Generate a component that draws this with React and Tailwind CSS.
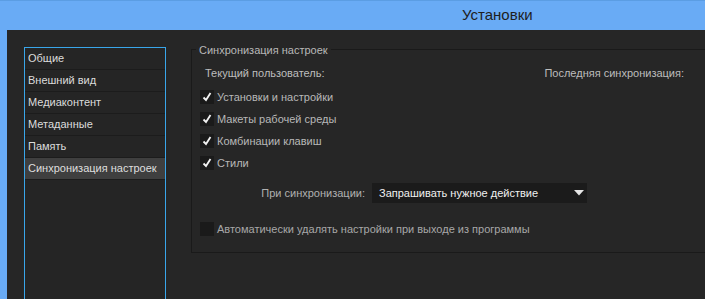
import React from 'react';

const sections = [
  'Общие',
  'Внешний вид',
  'Медиаконтент',
  'Метаданные',
  'Память',
  'Синхронизация настроек',
];

const syncItems = [
  'Установки и настройки',
  'Макеты рабочей среды',
  'Комбинации клавиш',
  'Стили',
];

const Check = ({ checked }) => (
  <span className="flex h-[14px] w-[14px] shrink-0 items-center justify-center bg-[#1a1a1a]">
    {checked && (
      <svg width="10" height="10" viewBox="0 0 10 10">
        <path d="M1.5 5.5 L4 8 L8.5 1" fill="none" stroke="#f2f2f2" strokeWidth="1.8" />
      </svg>
    )}
  </span>
);

export default function App() {
  return (
    <div
      className="flex h-[299px] w-[705px] flex-col overflow-hidden border-t border-[#5b9de3] bg-[#69abf5] text-[11px]"
      style={{ fontFamily: '"Liberation Sans", Arial, sans-serif' }}
    >
      {/* title bar */}
      <div className="flex h-[29px] shrink-0 items-center pl-[462px] text-[15px] text-[#1e1e1e]">
        Установки
      </div>

      {/* dark body */}
      <div className="ml-[7px] flex flex-1 gap-[25px] bg-[#262626] pl-[17px] pt-[17px]">
        {/* section list */}
        <div className="w-[142px] shrink-0 border border-b-0 border-[#39a6ea] bg-[#252525]">
          {sections.map((s, i) => (
            <div
              key={s}
              className={`flex h-[22px] items-center whitespace-nowrap border-b border-[#1c1c1c] pl-[3px] ${
                i === sections.length - 1 ? 'bg-[#3f3f3f] text-[#dedede]' : 'text-[#dcdcdc]'
              }`}
            >
              {s}
            </div>
          ))}
        </div>

        {/* group box */}
        <div className="flex-1 pt-[2px]">
          <div className="relative -mr-[4px] flex h-[204px] flex-col border border-[#1a1a1a] pl-[8px] pt-[15px]">
            <span className="absolute -top-[8px] left-[4px] bg-[#262626] px-[3px] text-[#b8b8b8]">
              Синхронизация настроек
            </span>

            <div className="flex h-[16px] items-center justify-between pr-[24px] text-[#bdbdbd]">
              <span className="pl-[5px]">Текущий пользователь:</span>
              <span>Последняя синхронизация:</span>
            </div>

            <div className="mt-[5px] flex flex-col">
              {syncItems.map((t) => (
                <div key={t} className="flex h-[22px] items-center gap-[3px] text-[#b8b8b8]">
                  <Check checked />
                  <span>{t}</span>
                </div>
              ))}
            </div>

            <div className="mt-[9px] flex h-[20px] items-center">
              <span className="w-[172px] pr-[7px] text-right text-[#b0b0b0]">При синхронизации:</span>
              <div className="flex h-[20px] w-[215px] items-center justify-between bg-[#1b1b1b] pl-[7px] pr-[3px] text-[#f0f0f0]">
                <span>Запрашивать нужное действие</span>
                <svg width="10" height="6" viewBox="0 0 10 6">
                  <path d="M0 0 H10 L5 5.5 Z" fill="#e6e6e6" />
                </svg>
              </div>
            </div>

            <div className="mt-[15px] flex h-[22px] items-center gap-[3px] text-[#a8a8a8]">
              <Check />
              <span>Автоматически удалять настройки при выходе из программы</span>
            </div>
          </div>
        </div>
      </div>
    </div>
  );
}
